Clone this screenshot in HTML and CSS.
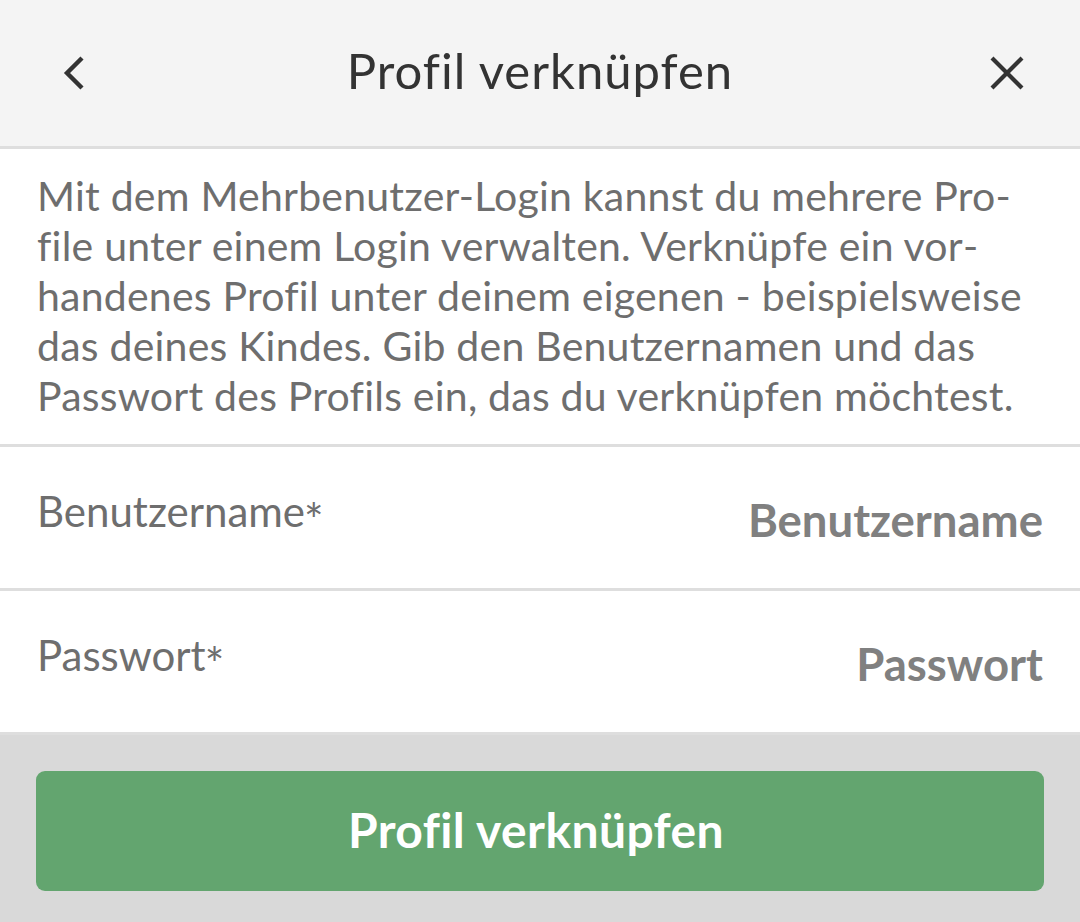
FILE: index.html
```html
<!DOCTYPE html>
<html lang="de">
<head>
<meta charset="utf-8">
<link rel="stylesheet" href="styles.css">
</head>
<body>
<div class="screen">
  <header class="topbar">
    <button class="icon-btn back" aria-label="Zurück">
      <svg width="24" height="34" viewBox="0 0 24 34"><path d="M20 2 L5 17 L20 32" fill="none" stroke="#333" stroke-width="4.4" stroke-linecap="butt" stroke-linejoin="miter"/></svg>
    </button>
    <h1 class="title">Profil verknüpfen</h1>
    <button class="icon-btn close" aria-label="Schließen">
      <svg width="34" height="34" viewBox="0 0 34 34"><path d="M2 2 L32 32 M32 2 L2 32" fill="none" stroke="#333" stroke-width="4.2" stroke-linecap="butt"/></svg>
    </button>
  </header>
  <section class="intro">
    <p>Mit dem Mehrbenutzer-Login kannst du mehrere Pro&shy;file unter einem Login verwalten. Verknüpfe ein vor&shy;handenes Profil unter deinem eigenen - beispielsweise das deines Kindes. Gib den Benutzernamen und das Passwort des Profils ein, das du verknüpfen möchtest.</p>
  </section>
  <div class="field">
    <label class="field-label">Benutzername<span class="req">*</span></label>
    <span class="field-placeholder">Benutzername</span>
  </div>
  <div class="field">
    <label class="field-label">Passwort<span class="req">*</span></label>
    <span class="field-placeholder">Passwort</span>
  </div>
  <footer class="actions">
    <button class="primary">Profil verknüpfen</button>
  </footer>
</div>
</body>
</html>
```
FILE: styles.css
```css
* { box-sizing: border-box; }
html, body { margin: 0; padding: 0; }
body {
  font-family: Lato, "Open Sans", sans-serif;
  background: #d9d9d9;
  width: 1080px;
  height: 922px;
  overflow: hidden;
}
.screen { display: flex; flex-direction: column; height: 922px; }
.topbar {
  height: 149px;
  background: #f4f4f4;
  border-bottom: 3px solid #dedede;
  display: grid;
  grid-template-columns: 1fr auto 1fr;
  align-items: center;
  padding: 0 54px;
}
.icon-btn {
  background: none; border: 0; padding: 0; margin: 0;
  display: flex; align-items: center; justify-content: center;
  width: 40px; height: 40px;
}
.back { justify-self: start; }
.close { justify-self: end; margin-right: -1px; }
.title {
  margin: 0;
  font-weight: 400;
  font-size: 49px;
  color: #333;
  letter-spacing: 1px;
  padding-bottom: 6px;
}
.intro {
  background: #fff;
  border-bottom: 3px solid #dedede;
  padding: 22px 37px 23px 37px;
}
.intro p {
  margin: 0;
  font-size: 41px;
  line-height: 50px;
  letter-spacing: 0.22px;
  color: #6e6e6e;
  hyphens: manual;
}
.field {
  background: #fff;
  border-bottom: 3px solid #dedede;
  height: 144px;
  display: flex;
  align-items: center;
  justify-content: space-between;
  padding: 0 37px;
}
.field-label {
  font-size: 42px;
  color: #6e6e6e;
  margin-top: -3px;
}
.req {
  vertical-align: -10px;
  font-size: 46px;
  margin-left: -1px;
}
.field-placeholder {
  font-size: 45.5px;
  font-weight: 700;
  color: #808080;
  margin-top: 4px;
}
.actions {
  flex: 1;
  background: #d9d9d9;
  padding: 36px 36px 0;
}
.primary {
  width: 100%;
  height: 120px;
  border: 0;
  border-radius: 9px;
  background: #63a56f;
  color: #fff;
  font-family: Lato, sans-serif;
  font-weight: 700;
  font-size: 48px;
  letter-spacing: 0.4px;
  padding: 0 8px 4px 0;
}
```
